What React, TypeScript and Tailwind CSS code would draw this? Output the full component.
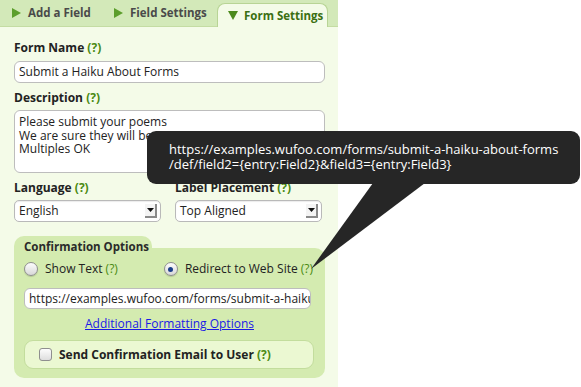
const font = "font-['Open_Sans','DejaVu_Sans',sans-serif]";

function Help() {
  return <span className="text-[#4a8a12]">(?)</span>;
}

function TabArrowRight() {
  return (
    <svg width="9" height="10" viewBox="0 0 9 10" className="shrink-0">
      <path d="M0 0 L9 5 L0 10 Z" fill="#5c9e2c" />
    </svg>
  );
}

function TabArrowDown() {
  return (
    <svg width="10" height="9" viewBox="0 0 10 9" className="shrink-0">
      <path d="M0 0 L10 0 L5 9 Z" fill="#4c8a1c" />
    </svg>
  );
}

function Select({ value }: { value: string }) {
  return (
    <div className="flex h-[22px] w-[147px] items-center justify-between rounded-[5px] border border-[#b9b9b9] bg-white pl-[4px] pr-[3px] shadow-[inset_0_1px_1px_rgba(0,0,0,0.08)]">
      <span className="text-[12px] leading-[14px] text-[#222]">{value}</span>
      <span className="flex h-[14px] w-[12px] items-center justify-center border-b-2 border-r-2 border-[#8a8a8a] bg-[#f4f4f4]">
        <svg width="7" height="4" viewBox="0 0 7 4">
          <path d="M0 0 L7 0 L3.5 4 Z" fill="#111" />
        </svg>
      </span>
    </div>
  );
}

function Radio({ checked }: { checked?: boolean }) {
  return (
    <span className="flex h-[14px] w-[14px] shrink-0 items-center justify-center rounded-full border border-[#8f8f8f] bg-gradient-to-b from-[#fdfdfd] to-[#d8d8d8] shadow-[0_1px_1px_rgba(0,0,0,0.15)]">
      {checked && <span className="h-[5px] w-[5px] rounded-full bg-[#1b3f8a]" />}
    </span>
  );
}

export default function App() {
  return (
    <div className={`relative h-[387px] w-[581px] overflow-hidden bg-white ${font}`}>
      <div className="flex h-full w-[338px] flex-col bg-[#f4fbe8]">
        {/* tabs */}
        <div className="flex h-[27px] shrink-0 items-end whitespace-nowrap border-b border-[#c4dca3] bg-[#d3e9b9] pl-[12px] text-[11.5px] font-bold leading-[14px]">
          <div className="mb-[6px] flex w-[102px] items-center gap-[7px] text-[#4a4a4a]">
            <TabArrowRight />
            <span>Add a Field</span>
          </div>
          <div className="mb-[6px] flex w-[103px] items-center gap-[7px] text-[#4a4a4a]">
            <TabArrowRight />
            <span>Field Settings</span>
          </div>
          <div className="relative -mb-px flex h-[24px] w-[111px] items-center gap-[6px] rounded-t-[8px] border border-b-0 border-[#b8d495] bg-[#f4fbe8] pl-[10px] text-[#3b6f12]">
            <TabArrowDown />
            <span>Form Settings</span>
          </div>
        </div>

        <div className="flex flex-col px-[14px] pt-[14px] text-[12px] leading-[14px]">
          <div className="font-bold text-[#222]">
            Form Name <Help />
          </div>
          <div className="mt-[6px] flex h-[22px] w-[311px] items-center rounded-[6px] border border-[#bdbdbd] bg-white px-[4px] text-[#222]">
            Submit a Haiku About Forms
          </div>

          <div className="mt-[8px] font-bold text-[#222]">
            Description <Help />
          </div>
          <div className="mt-[5px] h-[63px] w-[311px] rounded-[6px] border border-[#bdbdbd] bg-white px-[4px] pt-[4px] leading-[13.5px] text-[#222]">
            <div>Please submit your poems</div>
            <div>We are sure they will be great</div>
            <div>Multiples OK</div>
          </div>

          <div className="mt-[8px] flex gap-[14px]">
            <div className="flex flex-col">
              <div className="font-bold text-[#222]">
                Language <Help />
              </div>
              <div className="mt-[5px]">
                <Select value="English" />
              </div>
            </div>
            <div className="flex flex-col">
              <div className="font-bold text-[#222]">
                Label Placement <Help />
              </div>
              <div className="mt-[5px]">
                <Select value="Top Aligned" />
              </div>
            </div>
          </div>

          {/* confirmation options */}
          <div className="mt-[14px] flex w-[311px] flex-col">
            <div className="relative z-10 h-[20px] w-[138px] whitespace-nowrap rounded-t-[10px] bg-[#d4ebb0] pl-[10px] pt-[4px] text-[11.5px] font-bold text-[#2a2a2a]">
              Confirmation Options
            </div>
            <div className="-mt-[8px] rounded-b-[10px] rounded-tr-[10px] bg-[#d4ebb0] px-[10px] pb-[9px] pt-[14px]">
              <div className="flex h-[14px] items-center text-[#222]">
                <div className="flex items-center gap-[7px]">
                  <Radio />
                  <span>
                    Show Text <Help />
                  </span>
                </div>
                <div className="ml-[46px] flex items-center gap-[7px]">
                  <Radio checked />
                  <span>
                    Redirect to Web Site <Help />
                  </span>
                </div>
              </div>
              <div className="mt-[12px] flex h-[21px] w-[287px] items-center overflow-hidden whitespace-nowrap rounded-[6px] border border-[#bdbdbd] bg-white pl-[4px] text-[#222]">
                https://examples.wufoo.com/forms/submit-a-haiku-about-forms
              </div>
              <div className="mt-[8px] text-center text-[#1a1ae6] underline">Additional Formatting Options</div>
              <div className="mt-[9px] flex h-[29px] w-[290px] items-center gap-[7px] whitespace-nowrap rounded-[9px] border border-[#c3dd9d] bg-[#ebf8d2] pl-[14px] font-bold text-[#222]">
                <span className="h-[13px] w-[13px] shrink-0 rounded-[3px] border border-[#8f8f8f] bg-gradient-to-b from-[#fdfdfd] to-[#dedede]" />
                <span>
                  Send Confirmation Email to User <Help />
                </span>
              </div>
            </div>
          </div>
        </div>
      </div>

      {/* tooltip */}
      <div className="absolute left-[147px] top-[131px] h-[53px] w-[433px] whitespace-nowrap rounded-[9px] bg-[#262626] pl-[22px] pt-[11px] text-[13px] leading-[15px] text-white">
        <div>https://examples.wufoo.com/forms/submit-a-haiku-about-forms</div>
        <div>/def/field2={"{entry:Field2}"}&amp;field3={"{entry:Field3}"}</div>
      </div>
      <svg className="absolute left-0 top-0" width="581" height="387" viewBox="0 0 581 387">
        <path d="M373 183 L425 183 L311 269 Z" fill="#262626" />
      </svg>
    </div>
  );
}
